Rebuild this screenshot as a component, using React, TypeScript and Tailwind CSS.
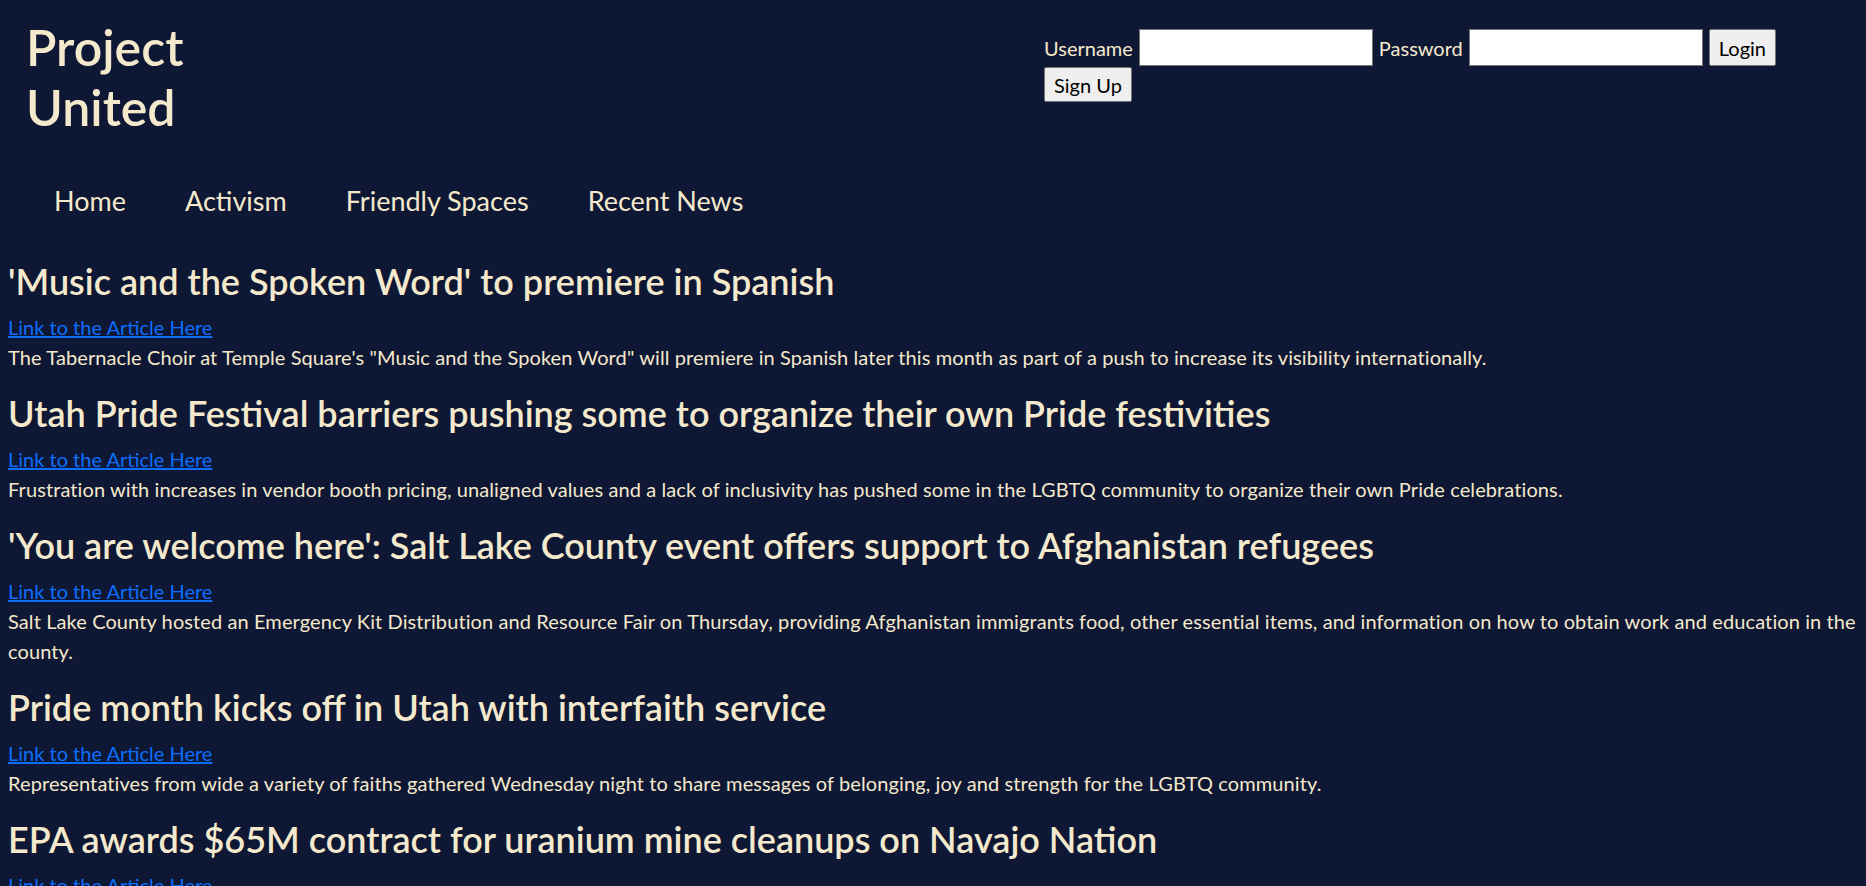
import React from "react";

const ARTICLES = [
  {
    title: "'Music and the Spoken Word' to premiere in Spanish",
    summary:
      "The Tabernacle Choir at Temple Square's \"Music and the Spoken Word\" will premiere in Spanish later this month as part of a push to increase its visibility internationally.",
  },
  {
    title: "Utah Pride Festival barriers pushing some to organize their own Pride festivities",
    summary:
      "Frustration with increases in vendor booth pricing, unaligned values and a lack of inclusivity has pushed some in the LGBTQ community to organize their own Pride celebrations.",
  },
  {
    title: "'You are welcome here': Salt Lake County event offers support to Afghanistan refugees",
    summary:
      "Salt Lake County hosted an Emergency Kit Distribution and Resource Fair on Thursday, providing Afghanistan immigrants food, other essential items, and information on how to obtain work and education in the county.",
  },
  {
    title: "Pride month kicks off in Utah with interfaith service",
    summary:
      "Representatives from wide a variety of faiths gathered Wednesday night to share messages of belonging, joy and strength for the LGBTQ community.",
  },
  {
    title: "EPA awards $65M contract for uranium mine cleanups on Navajo Nation",
    summary:
      "The U.S. Environmental Protection Agency has awarded a $65 million contract to clean up abandoned uranium mines on the Navajo Nation.",
  },
];

const NAV = ["Home", "Activism", "Friendly Spaces", "Recent News"];

function Header() {
  return (
    <header className="flex items-start">
      <div className="w-[1044px] pl-[26px] pt-[17px]">
        <h1 className="w-[200px] text-[50px] leading-[60px] font-semibold">Project United</h1>
      </div>
      <form className="flex flex-1 flex-wrap content-start items-center gap-x-[6px] gap-y-[1px] pt-[29px] pr-[20px] text-[20px]">
        <label>Username</label>
        <input type="text" className="h-[37px] w-[234px] border border-[#767676] bg-white text-black" />
        <label>Password</label>
        <input type="password" className="h-[37px] w-[234px] border border-[#767676] bg-white text-black" />
        <button type="button" className="h-[37px] rounded-[2px] border border-[#767676] bg-[#efefef] px-[9px] text-black">
          Login
        </button>
        <button type="button" className="h-[35px] rounded-[2px] border border-[#767676] bg-[#efefef] px-[9px] text-black">
          Sign Up
        </button>
      </form>
    </header>
  );
}

export default function App() {
  return (
    <div className="min-h-screen bg-[#0e1734] text-[#f4e9cc]" style={{ fontFamily: "Lato, 'Noto Sans', sans-serif" }}>
      <Header />
      <nav className="flex gap-[59px] pl-[54px] pt-[43px] text-[27px] leading-[42px]">
        {NAV.map((item) => (
          <a key={item} href="#" className="text-[#f4e9cc]">
            {item}
          </a>
        ))}
      </nav>
      <main className="px-2 pt-[38px]">
        {ARTICLES.map((a) => (
          <article key={a.title}>
            <h3 className="mb-[10px] text-[36px] leading-[42px] font-semibold">{a.title}</h3>
            <a href="#" className="block text-[20px] leading-[30px] text-[#0d6efd] underline">
              Link to the Article Here
            </a>
            <p className="mb-[20px] text-[20px] leading-[30px] tracking-[0.1px]">{a.summary}</p>
          </article>
        ))}
      </main>
    </div>
  );
}
